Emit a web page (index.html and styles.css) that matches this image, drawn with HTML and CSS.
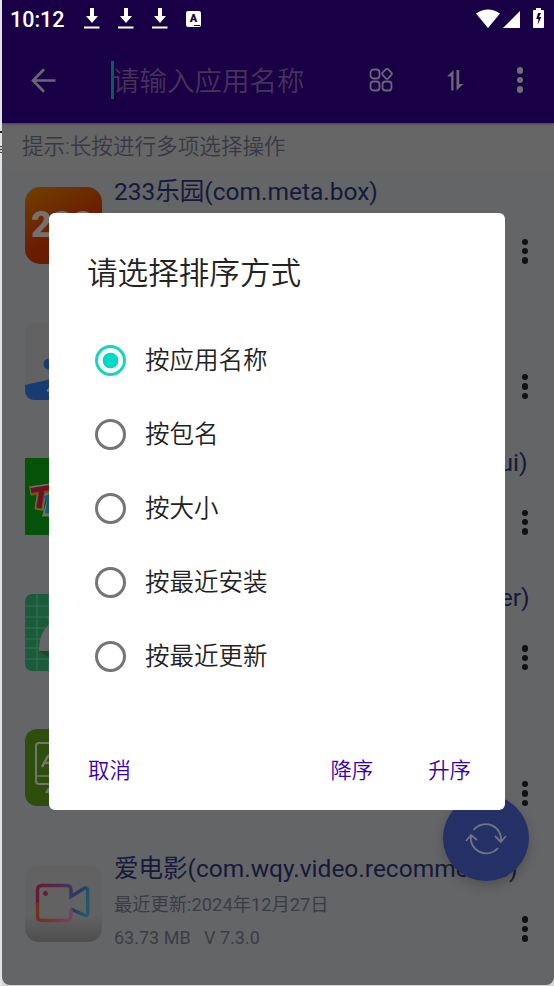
FILE: index.html
```html
<!DOCTYPE html>
<html lang="zh-CN">
<head>
<meta charset="utf-8">
<title>应用列表</title>
<link rel="stylesheet" href="styles.css">
</head>
<body>
<div class="edge"><i class="edge-top"></i><i class="edge-mark"></i><i class="edge-mark small"></i></div>
<div class="screen">
  <header class="top">
    <div class="status">
      <span class="clock">10:12</span>
      <svg class="dl" width="16" height="22" viewBox="0 0 16 22"><path d="M6 0h4v8h4l-6 7-6-7h4zM0 18.500h15.500v2H0z"/></svg>
      <svg class="dl" width="16" height="22" viewBox="0 0 16 22"><path d="M6 0h4v8h4l-6 7-6-7h4zM0 18.500h15.500v2H0z"/></svg>
      <svg class="dl" width="16" height="22" viewBox="0 0 16 22"><path d="M6 0h4v8h4l-6 7-6-7h4zM0 18.500h15.500v2H0z"/></svg>
      <span class="badge">A<i></i></span>
      <span class="grow"></span>
      <svg class="wifi" width="24" height="20" viewBox="0 0 24 20"><path d="M0 4.500Q12-3.500 24 4.500L12 19z"/></svg>
      <svg class="signal" width="17" height="17" viewBox="0 0 17 17"><path d="M17 0v17H0z"/></svg>
      <svg class="battery" width="11" height="20" viewBox="0 0 11 20"><path fill-rule="evenodd" d="M3 0h5v2h2q1 0 1 1v16q0 1-1 1H1q-1 0-1-1V3q0-1 1-1h2zM5 5 3.300 11h2.200l-1 6 3.900-8H6l2-4z"/></svg>
    </div>
    <div class="bar">
      <svg class="back" width="25" height="25" viewBox="0 0 25 25"><path d="M24.500 12.500H2M13 1.300 2 12.500l11 11.200"/></svg>
      <div class="search">请输入应用名称</div>
      <svg class="apps" width="24" height="24" viewBox="0 0 24 24"><rect x="1.500" y="1.500" width="9" height="9" rx="3"/><path d="M18 .8q.7 0 1.200.5l3.200 3.400q1 1.100 0 2.200l-3.200 3.400q-1.200 1.200-2.400 0l-3.200-3.400q-1-1.100 0-2.200l3.200-3.400q.5-.5 1.200-.5z"/><rect x="1.500" y="13.500" width="9" height="9" rx="3"/><rect x="13.500" y="13.500" width="9" height="9" rx="3"/></svg>
      <svg class="sort" width="17" height="21" viewBox="0 0 17 21"><path d="M6.500 0v20.500H4.200V6.500H0zM9.500 0h2.700v14H16.500L9.500 20.500z"/></svg>
      <span class="dots light"><i></i><i></i><i></i></span>
    </div>
  </header>
  <p class="hint">提示:长按进行多项选择操作</p>
  <main class="list">
    <article class="row">
      <div class="icon fire"><b>233</b></div>
      <div class="info"><h2>233乐园(com.meta.box)</h2></div>
      <span class="dots"><i></i><i></i><i></i></span>
    </article>
    <article class="row">
      <div class="icon pale"><svg width="77" height="77" viewBox="0 0 77 77"><circle cx="24" cy="41" r="5.500" fill="#163c73"/><path d="M0 62Q18 58 28 55.500H77V77H0z" fill="#163c73"/><path d="M22 68l5-6m-3 10 3-7m-5 3h5" stroke="#707780" stroke-width="1.500"/></svg></div>
      <div class="info"></div>
      <span class="dots"><i></i><i></i><i></i></span>
    </article>
    <article class="row">
      <div class="icon green"><svg width="77" height="77" viewBox="0 0 77 77"><g fill="none"><path d="M5 33l20-3M17 32l-3 20M20 40l8-3-5 17h9" stroke="#77705f" stroke-width="9"/><path d="M6 34l19-3M17 32l-3 19" stroke="#7a5210" stroke-width="7"/><path d="M6 32.500l19-3M17 31l-3 19" stroke="#6b1026" stroke-width="5"/><path d="M20 41l5-3-2 15h6" stroke="#145a78" stroke-width="5"/></g></svg></div>
      <div class="info"><h2 class="tail ui">ui)</h2></div>
      <span class="dots"><i></i><i></i><i></i></span>
    </article>
    <article class="row">
      <div class="icon mint"><svg width="77" height="77" viewBox="0 0 77 77"><path d="M12 0v77M24 0v77M0 12h77M0 23h77M0 34h77M0 45h77M0 54h77M0 65h77" stroke="#357452" stroke-width="1"/><path d="M14 57Q14 38 25 30l-3-9 8 8V57z" fill="#666"/><path d="M14 57h15v10z" fill="#174b31"/></svg></div>
      <div class="info"><h2 class="tail er">er)</h2></div>
      <span class="dots"><i></i><i></i><i></i></span>
    </article>
    <article class="row">
      <div class="icon lime"><svg width="77" height="77" viewBox="0 0 77 77"><rect x="11" y="14" width="50" height="41" rx="3" fill="none" stroke="#71776a" stroke-width="2"/><path d="M11 47h30" stroke="#71776a" stroke-width="1.500"/><path d="M17 38l6-11h3M19 34h6" fill="none" stroke="#71776a" stroke-width="2.500"/><path d="M20 64q2-6 8-7v7z" fill="#71776a"/></svg></div>
      <div class="info"></div>
      <span class="dots"><i></i><i></i><i></i></span>
    </article>
    <article class="row">
      <div class="icon video"><svg width="77" height="77" viewBox="0 0 77 77"><defs><linearGradient id="cam" x1="0" y1=".3" x2="1" y2=".5"><stop offset="0" stop-color="#681936"/><stop offset=".5" stop-color="#493258"/><stop offset=".8" stop-color="#263966"/><stop offset="1" stop-color="#25576a"/></linearGradient><linearGradient id="camlow" x1="0" x2="1"><stop offset="0" stop-color="#74301b"/><stop offset="1" stop-color="#70445b"/></linearGradient></defs><path d="M13.500 40V25q0-4.500 4.500-4.500H42.500q4.500 0 4.500 4.500v6.500L60 23.500q3.700-2 3.700 1.700v23q0 3.500-3 2L47 44" fill="none" stroke="url(#cam)" stroke-width="3.400"/><path d="M13.500 38v13q0 4.500 4.500 4.500H42.500q4.500 0 4.500-5V44" fill="none" stroke="url(#camlow)" stroke-width="3.400"/><circle cx="21.500" cy="28.500" r="2.400" fill="#681936"/></svg></div>
      <div class="info"><h2>爱电影(com.wqy.video.recommende)</h2><p class="date">最近更新:2024年12月27日</p><p class="size">63.73 MB&nbsp;&nbsp; V 7.3.0</p></div>
      <span class="dots"><i></i><i></i><i></i></span>
    </article>
  </main>
  <div class="fab"><svg width="42" height="34" viewBox="0 0 42 34"><path d="M8.500 8A15.500 15.500 0 0 1 36 20M30 14l5.800 6 5.200-6M33 26A15.500 15.500 0 0 1 6 13M1 19l5-6 6 5"/></svg></div>
</div>
<section class="dialog">
  <h1>请选择排序方式</h1>
  <ul>
    <li class="on"><i></i>按应用名称</li>
    <li><i></i>按包名</li>
    <li><i></i>按大小</li>
    <li><i></i>按最近安装</li>
    <li><i></i>按最近更新</li>
  </ul>
  <footer><span>取消</span><span class="grow"></span><span>降序</span><span class="asc">升序</span></footer>
</section>
</body>
</html>
```
FILE: styles.css
```css
* { box-sizing: border-box; margin: 0; padding: 0; }
body {
  width: 554px; height: 986px; overflow: hidden; position: relative;
  display: flex; background: #d4d5d6;
  font-family: Roboto, "Noto Sans CJK SC", sans-serif; font-weight: 400;
}
.edge { width: 2px; flex: none; background: #e2e3e5; }
.edge i { display: block; }
.edge-top { height: 131px; }
.edge-mark { height: 2px; background: #222; margin-bottom: 13px; }
.edge-mark.small { height: 7px; background: repeating-linear-gradient(#444 0 1px, #ccc 1px 3px); }
.screen {
  width: 552px; height: 985px; position: relative; overflow: hidden;
  display: flex; flex-direction: column; background: #646567;
  border-radius: 0 0 8px 8px;
}
.grow { flex: 1; }

.top { flex: none; height: 123px; background: #190046; box-shadow: 0 1px 2px #493d58; position: relative; }
.status { height: 37px; display: flex; align-items: center; padding: 0 10px 0 8px; color: #fff; }
.status svg { fill: #fff; flex: none; }
.clock { width: 74px; font-size: 21.5px; font-weight: 500; line-height: 37px; padding-top: 2px; }
.dl { margin-right: 18px; }
.badge {
  width: 15px; height: 16px; border-radius: 2px; background: #fff; color: #190046;
  font-size: 11px; font-weight: 900; line-height: 15px; text-align: center; position: relative;
}
.badge i { position: absolute; right: 1px; bottom: 1px; width: 6px; height: 1px; background: #190046; }
.wifi { margin-right: -1px; }
.signal { margin: 2px 13px 0 4px; }
.battery { margin-top: -1px; }
.bar { height: 86px; display: flex; align-items: center; padding-left: 29px; }
.back { fill: none; stroke: #6d6473; stroke-width: 2.7; }
.search {
  margin-left: 55px; width: 258px; height: 38px; line-height: 41px;
  border-left: 3px solid #0c5b5c; font-size: 27.5px; font-weight: 350; color: #463359; text-indent: -2px; white-space: nowrap;
}
.apps { fill: none; stroke: #6d6476; stroke-width: 1.8; }
.sort { margin-left: 54px; fill: #6d6476; }
.dots { display: flex; flex-direction: column; gap: 3px; }
.dots i { width: 6.400px; height: 6.400px; border-radius: 50%; background: #101112; }
.dots.light { margin-left: 52.500px; }
.dots.light i { background: #746a78; }

.hint { flex: none; height: 47px; line-height: 48px; padding-left: 20px; background: #666; color: #383845; font-size: 21.6px; font-weight: 350; }
.list { flex: none; }
.row { height: 135.6px; display: flex; padding-left: 23px; }
.icon { width: 77px; height: 77px; flex: none; margin-top: 17px; overflow: hidden; border-radius: 9px; }
.icon svg { display: block; }
.fire { border-radius: 15px; background: linear-gradient(150deg, #704000, #6b1d00 55%, #641800); }
.fire b { display: block; font-size: 36px; line-height: 77px; padding-left: 6px; color: #77706b; font-weight: 900; }
.pale { background: #626263; }
.green { border-radius: 0; background: #055309; }
.mint { border-radius: 7px; background: #1b5a3a; }
.lime { border-radius: 12px; background: #2e4e0b; }
.video { border-radius: 14px; background: linear-gradient(#626263 65%, #4d4d4e); }
.video svg { margin: 0 0 0 -1px; }
.info { width: 407.5px; margin-left: 12px; padding-top: 3.5px; color: #3b3b46; font-size: 18.4px; white-space: nowrap; }
h2 { font-size: 24.5px; line-height: 36px; font-weight: 400; color: #16193a; }
.tail { text-align: right; }
.tail.ui { margin-right: -6px; }
.tail.er { margin-right: -8px; }
.date { line-height: 33px; margin-top: 1px; font-size: 18.3px; }
.size { line-height: 33px; font-size: 18px; }
.row .dots { margin-top: 68.5px; }
.fab {
  position: absolute; left: 441px; top: 795px; width: 86px; height: 86px; border-radius: 50%;
  background: #243066; box-shadow: 0 5px 12px #0003; display: flex; align-items: center; justify-content: center;
}
.fab svg { fill: none; stroke: #6f7485; stroke-width: 1.8; margin-top: 1px; }

.dialog {
  position: absolute; left: 49px; top: 213px; width: 456px; height: 597px;
  background: #fff; border-radius: 6px; color: #222; padding: 0 34px 0 39px; font-weight: 350;
}
h1 { font-size: 30.6px; font-weight: 350; line-height: 44px; margin: 39px 0 0 -1px; }
ul { list-style: none; margin-top: 28px; }
li { height: 74px; display: flex; align-items: center; padding-left: 7px; font-size: 24.5px; line-height: 36px; padding-bottom: 1px; }
li i { width: 31px; height: 31px; flex: none; margin-right: 19px; border: 3px solid #757575; border-radius: 50%; }
.on i { border-color: #18d5c3; background: radial-gradient(circle, #03dac5 7.5px, #fff 8.2px); }
footer { display: flex; margin-top: 61px; font-size: 21.4px; line-height: 32px; color: #3700b3; }
.asc { margin-left: 55px; }
```
